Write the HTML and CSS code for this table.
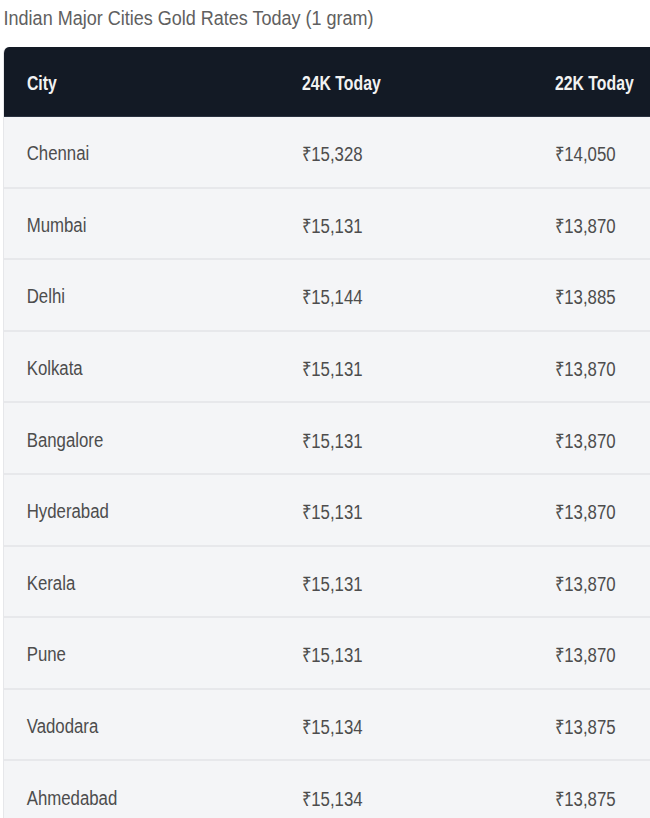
FILE: index.html
```html
<!DOCTYPE html>
<html>
<head>
<meta charset="utf-8">
<link rel="stylesheet" href="styles.css">
</head>
<body>
<div class="page">
  <h2 class="title">Indian Major Cities Gold Rates Today (1 gram)</h2>
  <div class="table">
    <div class="row head">
      <div class="c1">City</div><div class="c2">24K Today</div><div class="c3">22K Today</div>
    </div>
    <div class="row"><div class="c1">Chennai</div><div class="c2">₹15,328</div><div class="c3">₹14,050</div></div>
    <div class="row"><div class="c1">Mumbai</div><div class="c2">₹15,131</div><div class="c3">₹13,870</div></div>
    <div class="row"><div class="c1">Delhi</div><div class="c2">₹15,144</div><div class="c3">₹13,885</div></div>
    <div class="row"><div class="c1">Kolkata</div><div class="c2">₹15,131</div><div class="c3">₹13,870</div></div>
    <div class="row"><div class="c1">Bangalore</div><div class="c2">₹15,131</div><div class="c3">₹13,870</div></div>
    <div class="row"><div class="c1">Hyderabad</div><div class="c2">₹15,131</div><div class="c3">₹13,870</div></div>
    <div class="row"><div class="c1">Kerala</div><div class="c2">₹15,131</div><div class="c3">₹13,870</div></div>
    <div class="row"><div class="c1">Pune</div><div class="c2">₹15,131</div><div class="c3">₹13,870</div></div>
    <div class="row"><div class="c1">Vadodara</div><div class="c2">₹15,134</div><div class="c3">₹13,875</div></div>
    <div class="row"><div class="c1">Ahmedabad</div><div class="c2">₹15,134</div><div class="c3">₹13,875</div></div>
  </div>
</div>
</body>
</html>
```
FILE: styles.css
```css
html, body {
  margin: 0;
  padding: 0;
  background: #ffffff;
  overflow: hidden;
}
.page {
  width: 650px;
  height: 818px;
  overflow: hidden;
  font-family: "Liberation Sans", Arial, sans-serif;
}
.title {
  margin: 0;
  padding: 6px 0 0 4px;
  height: 47px;
  box-sizing: border-box;
  font-size: 20px;
  font-weight: normal;
  color: #606060;
  line-height: 24px;
  transform: scaleX(0.9);
  transform-origin: 0 50%;
  white-space: nowrap;
}
.table {
  margin-left: 3px;
  width: 700px;
  border-left: 1px solid #e6e7ea;
  border-top-left-radius: 6px;
  overflow: hidden;
}
.row {
  display: grid;
  grid-template-columns: 298px 253px 1fr;
  height: 71.6px;
  align-items: center;
  background: #f4f5f7;
  border-bottom: 2px solid #e7e8eb;
  box-sizing: border-box;
  font-size: 20px;
  color: #4d4d4d;
}
.row > div {
  white-space: nowrap;
  padding-top: 4px;
  transform: scaleX(0.84);
  transform-origin: 0 50%;
}
.c1 { padding-left: 27px; }
.head {
  background: #131a25;
  color: #f2f2f2;
  font-weight: bold;
  height: 70px;
  border-bottom: 1px solid #2a3240;
}
.head > div {
  transform: scaleX(0.79);
}
.head > .c1 { padding-left: 29px; }
```
